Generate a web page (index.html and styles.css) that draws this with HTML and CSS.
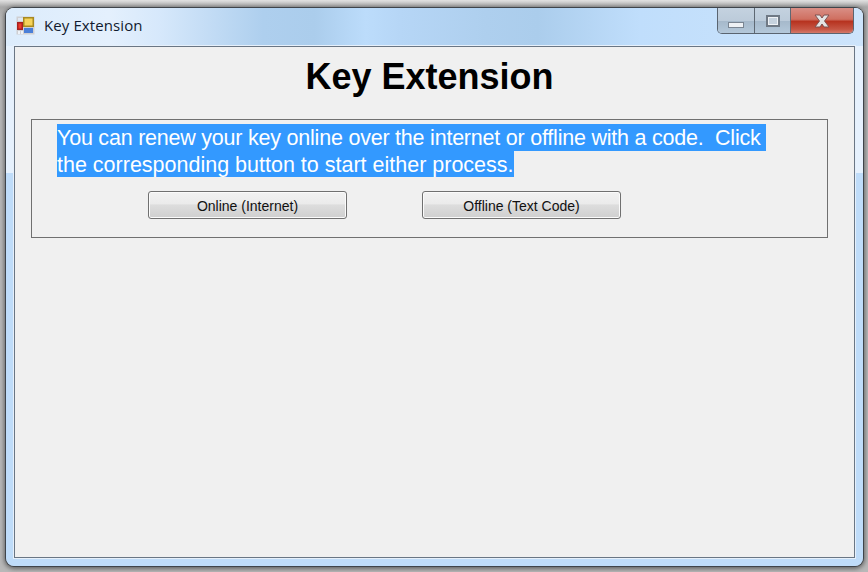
FILE: index.html
```html
<!DOCTYPE html>
<html lang="en">
<head>
<meta charset="utf-8">
<title>Key Extension</title>
<link rel="stylesheet" href="styles.css">
</head>
<body>
<div class="window">
  <div class="titlebar">
    <div class="title-left">
      <svg class="app-icon" width="19" height="19" viewBox="0 0 19 19">
        <rect x="0.5" y="0.5" width="18" height="18" fill="#cfcfd2"/>
        <rect x="2" y="2" width="5" height="3" fill="#dfe8f4"/>
        <rect x="7" y="1" width="11" height="10" fill="#a88a20"/>
        <rect x="8.5" y="2.500" width="8" height="7" fill="#f6d35a"/>
        <rect x="1" y="6" width="6" height="8" fill="#a82020"/>
        <rect x="2.500" y="7.500" width="3" height="5" fill="#ee3a2a"/>
        <rect x="8" y="12" width="9" height="5" fill="#4a7fd8"/>
        <rect x="2" y="15" width="2" height="3" fill="#eef2f8"/>
        <rect x="5" y="15" width="2" height="3" fill="#eef2f8"/>
      </svg>
      <span class="title-text">Key Extension</span>
    </div>
    <div class="caption">
      <div class="cap cap-min"><span class="glyph-min"></span></div>
      <div class="cap cap-max"><span class="glyph-max"></span></div>
      <div class="cap cap-close">
        <svg width="20" height="14" viewBox="0 0 20 14">
          <path d="M3 1h5l2 3 2-3h5l-4.500 6 4.500 6h-5l-2-3-2 3H3l4.500-6z" fill="#e4e4e4" stroke="#7e5250" stroke-width="1"/>
        </svg>
      </div>
    </div>
  </div>
  <main class="client">
    <h1 class="heading">Key Extension</h1>
    <section class="group">
      <p class="message"><span class="selected line-one">You can renew your key online over the internet or offline with a code.&nbsp; Click&nbsp;</span><br><span class="selected">the corresponding button to start either process.</span></p>
      <div class="actions">
        <button class="btn" type="button">Online (Internet)</button>
        <button class="btn" type="button">Offline (Text Code)</button>
      </div>
    </section>
  </main>
</div>
</body>
</html>
```
FILE: styles.css
```css
* { box-sizing: border-box; }
html, body { margin: 0; height: 100%; }
body {
  width: 868px;
  height: 572px;
  padding: 8px 5px 6px 6px;
  background: linear-gradient(#e2e2e2 0, #a8a8a8 7px, #b8b8b8 20px);
  overflow: hidden;
  font-family: "Liberation Sans", Arial, sans-serif;
}
.window {
  width: 857px;
  height: 558px;
  display: flex;
  flex-direction: column;
  padding: 0 8px 8px 8px;
  border-radius: 8px;
  background: linear-gradient(#e6f1fd 0, #e6f1fd 165px, #bfdcf9 165px, #bfdcf9 100%);
  box-shadow: 0 0 0 1px #3f444a, 0 1px 4px 2px #666;
}
.titlebar {
  height: 38px;
  margin: 0 -8px;
  padding: 0 8px;
  flex: none;
  display: flex;
  justify-content: space-between;
  align-items: flex-start;
  border-radius: 8px 8px 0 0;
  background: linear-gradient(90deg, #dcecfc 0, #e4f0fd 12%, #d6e8fb 18%, #aecfee 30%, #abcdec 36%, #bcdcfb 42%, #b6d6f6 46%, #aecfee 56%, #abcdec 62%, #c0defc 74%, #cde4fb 100%);
}
.title-left {
  display: flex;
  align-items: center;
  gap: 9px;
  padding: 8px 0 0 2px;
}
.app-icon { display: block; flex: none; }
.title-text {
  font-family: "Open Sans", "Liberation Sans", sans-serif;
  font-size: 15px;
  line-height: 19px;
  letter-spacing: 0.1px;
  color: #111a2e;
}
.caption {
  display: flex;
  height: 26px;
  margin: 0 1px 0 0;
  border: 1px solid #5a6470;
  border-top: 0;
  border-radius: 0 0 5px 5px;
  overflow: hidden;
}
.cap {
  display: flex;
  align-items: center;
  justify-content: center;
  padding-top: 1px;
  border-right: 1px solid #5e6873;
}
.cap-min {
  width: 37px;
  padding-top: 9px;
  background: linear-gradient(#c4d2e0 0, #bccbda 50%, #a6b9cb 54%, #b4c8da 100%);
}
.cap-max {
  width: 36px;
  background: linear-gradient(#c4d2e0 0, #bccbda 50%, #a6b9cb 54%, #b4c8da 100%);
}
.cap-close {
  width: 62px;
  border-right: 0;
  background: linear-gradient(#d98f86 0, #cf6f60 45%, #b73320 54%, #c65644 85%, #d4796a 100%);
}
.glyph-min {
  display: block;
  width: 16px;
  height: 6px;
  background: #eef1f5;
  border: 1px solid #7a8592;
}
.glyph-max {
  display: block;
  width: 14px;
  height: 12px;
  background: #c6d2de;
  border: 2px solid #6f7985;
  box-shadow: inset 0 0 0 1px #eef1f5;
}
.client {
  flex: 1;
  display: flex;
  flex-direction: column;
  padding: 9px 26px 0 16px;
  background: #f0f0f0;
  border: 1px solid #6a7684;
  box-shadow: 0 0 0 1px #e6f0fb;
}
.heading {
  margin: 0;
  font-size: 36px;
  line-height: 42px;
  font-weight: 700;
  color: #000;
  text-align: center;
}
.group {
  margin-top: 21px;
  width: 797px;
  height: 119px;
  padding: 5px 0 0 25px;
  border: 1.5px solid #707070;
}
.message {
  margin: 0;
  font-size: 21.5px;
  line-height: 27px;
  color: #fff;
  white-space: nowrap;
}
.selected { background: #3399ff; padding: 2px 0 0; }
.line-one { padding-bottom: 1px; letter-spacing: -0.22px; }
.actions {
  display: flex;
  gap: 75px;
  margin: 12px 0 0 91px;
}
.btn {
  width: 199px;
  height: 28px;
  padding: 1px 0 0;
  border: 1px solid #707070;
  border-radius: 3px;
  background: linear-gradient(#f2f2f2 0, #ebebeb 45%, #dddddd 50%, #cfcfcf 100%);
  box-shadow: inset 0 0 0 1px #fbfbfb;
  font-family: "Liberation Sans", Arial, sans-serif;
  font-size: 14px;
  color: #111;
}
```
